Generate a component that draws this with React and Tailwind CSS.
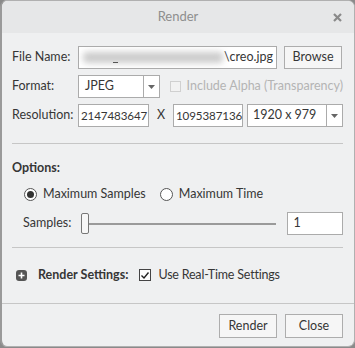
export default function App() {
  const font = { fontFamily: 'Lato, "Noto Sans", sans-serif' };
  return (
    <div className="w-[355px] h-[348px] bg-[#8a8a8a] text-[12.5px] text-[#363636] whitespace-nowrap" style={font}>
      <div className="w-[355px] h-[347px] bg-[#eff0f1] rounded-[7px] border border-[#b0b0b0] border-l-2 border-l-[#9a9a9a] overflow-hidden flex flex-col">
        {/* Title bar */}
        <div className="h-[32px] shrink-0 bg-[#e6e7e8] relative flex items-center justify-center">
          <span className="text-[13px] text-[#8e8e8e]">Render</span>
          <span className="absolute right-[11px] top-[11px] text-[#8e8e8e]">
            <svg width="11" height="11" viewBox="0 0 11 11">
              <path d="M2 2 L9 9 M9 2 L2 9" stroke="#8a8a8a" strokeWidth="2.2" strokeLinecap="butt" />
            </svg>
          </span>
        </div>
        <div className="flex flex-col pl-[10px] pr-[11px]">
          {/* File name */}
          <div className="flex items-center h-[23px] mt-[13px]">
            <div className="w-[66px] shrink-0">File Name:</div>
            <div className="w-[199px] h-[23px] bg-white border border-[#ababab] relative overflow-hidden flex items-center justify-end pr-[3px]">
              <div className="absolute left-[4px] top-[5px] w-[140px] h-[11px] bg-[#cccccc] blur-[3px] rounded"></div>
              <div className="absolute left-[34px] top-[15px] w-[5px] h-[1px] bg-[#555]"></div>
              <span className="relative">\creo.jpg</span>
            </div>
            <div className="ml-[7px] w-[58px] h-[23px] bg-[#f6f6f6] border border-[#adadad] flex items-center justify-center">Browse</div>
          </div>
          {/* Format */}
          <div className="flex items-center h-[23px] mt-[6px]">
            <div className="w-[66px] shrink-0">Format:</div>
            <div className="w-[82px] h-[23px] bg-white border border-[#ababab] flex">
              <div className="flex-1 flex items-center pl-[6px]">JPEG</div>
              <div className="w-[16px] border-l border-[#ababab] flex items-center justify-center">
                <svg width="7" height="4" viewBox="0 0 7 4"><path d="M0 0 H7 L3.5 4 Z" fill="#666" /></svg>
              </div>
            </div>
            <div className="ml-[10px] w-[11px] h-[11px] border border-[#d0d0d0] bg-[#f2f2f2]"></div>
            <div className="ml-[6px] text-[#b4b4b4]">Include Alpha (Transparency)</div>
          </div>
          {/* Resolution */}
          <div className="flex items-center h-[23px] mt-[6px]">
            <div className="w-[66px] shrink-0">Resolution:</div>
            <div className="w-[71px] h-[23px] bg-white border border-[#ababab] flex items-center pl-[2px] text-[11.6px] tracking-[-0.1px]">2147483647</div>
            <div className="w-[24px] text-center">X</div>
            <div className="w-[70px] h-[23px] bg-white border border-[#ababab] flex items-center pl-[2px] text-[11.6px] tracking-[-0.1px]">1095387136</div>
            <div className="ml-[4px] w-[96px] h-[23px] bg-white border border-[#ababab] flex">
              <div className="flex-1 flex items-center pl-[5px]">1920 x 979</div>
              <div className="w-[16px] border-l border-[#ababab] flex items-center justify-center">
                <svg width="7" height="4" viewBox="0 0 7 4"><path d="M0 0 H7 L3.5 4 Z" fill="#666" /></svg>
              </div>
            </div>
          </div>
          {/* Separator */}
          <div className="h-px bg-[#c6c6c6] mt-[16px]"></div>
          {/* Options */}
          <div className="mt-[16px] font-bold leading-[16px]">Options:</div>
          <div className="flex items-center h-[16px] mt-[10px] pl-[12px]">
            <div className="w-[13px] h-[13px] rounded-full border border-[#555] flex items-center justify-center bg-white">
              <div className="w-[7px] h-[7px] rounded-full bg-[#333]"></div>
            </div>
            <div className="ml-[6px]">Maximum Samples</div>
            <div className="ml-[14px] w-[13px] h-[13px] rounded-full border border-[#555] bg-white"></div>
            <div className="ml-[6px]">Maximum Time</div>
          </div>
          <div className="flex items-center h-[23px] mt-[10px] pl-[11px]">
            <div className="w-[58px] shrink-0">Samples:</div>
            <div className="relative w-[197px] h-[22px] flex items-center">
              <div className="absolute left-[4px] right-0 top-[10px] h-[2px] bg-[#9a9a9a]"></div>
              <div className="relative w-[8px] h-[21px] bg-[#f7f7f7] border border-[#777] rounded-[2px]"></div>
            </div>
            <div className="ml-[11px] w-[56px] h-[23px] bg-white border border-[#ababab] flex items-center pl-[5px]">1</div>
          </div>
          {/* Separator */}
          <div className="h-px bg-[#c6c6c6] mt-[12px]"></div>
          {/* Render settings */}
          <div className="flex items-center h-[16px] mt-[19px] pl-[4px]">
            <div className="w-[11px] h-[11px] rounded-[3px] bg-[#555] flex items-center justify-center">
              <svg width="7" height="7" viewBox="0 0 7 7"><path d="M3.5 0.5 V6.5 M0.5 3.5 H6.5" stroke="white" strokeWidth="1.6" /></svg>
            </div>
            <div className="ml-[11px] font-bold">Render Settings:</div>
            <div className="ml-[11px] w-[12px] h-[12px] border border-[#444] bg-white flex items-center justify-center">
              <svg width="10" height="9" viewBox="0 0 10 9"><path d="M1.5 4.5 L4 7 L8.5 1.5" stroke="#222" strokeWidth="1.4" fill="none" /></svg>
            </div>
            <div className="ml-[7px] tracking-[-0.2px]">Use Real-Time Settings</div>
          </div>
        </div>
        <div className="h-px bg-[#c6c6c6] mt-[20px]"></div>
        <div className="flex justify-end gap-[8px] pr-[11px] mt-[10px]">
          <div className="w-[58px] h-[24px] bg-[#f6f6f6] border border-[#adadad] flex items-center justify-center">Render</div>
          <div className="w-[58px] h-[24px] bg-[#f6f6f6] border border-[#adadad] flex items-center justify-center">Close</div>
        </div>
      </div>
    </div>
  );
}
